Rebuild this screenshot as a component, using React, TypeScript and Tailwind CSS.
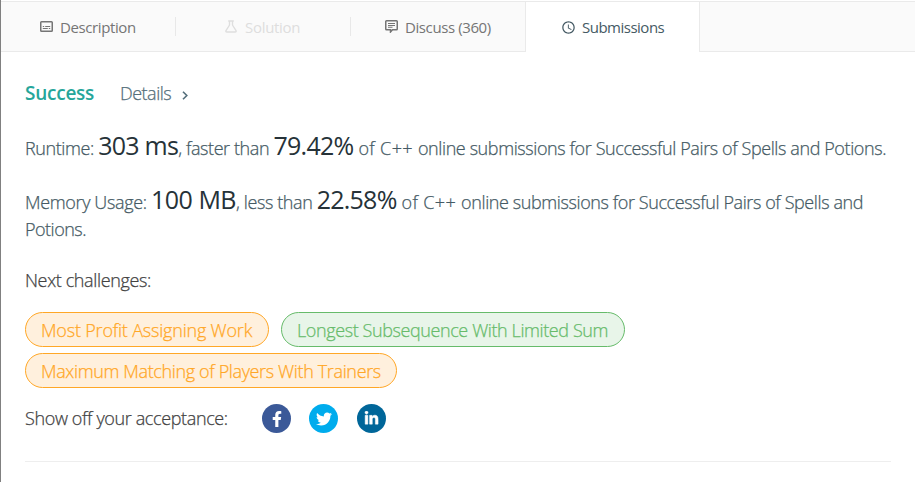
import { MdAccessTime } from "react-icons/md";
import { FaFacebookF, FaTwitter, FaLinkedinIn } from "react-icons/fa";

function SubtitlesIcon() {
  return (
    <svg viewBox="0 0 13 11" className="h-[11px] w-[13px] shrink-0" fill="none" stroke="currentColor">
      <rect x="0.75" y="0.75" width="11.5" height="9.5" rx="0.8" strokeWidth="1.5" />
      <path d="M2.8 5.500h1.400M5.200 5.500h5M2.800 7.500h5M8.800 7.500h1.400" strokeWidth="1.1" />
    </svg>
  );
}

function FlaskIcon() {
  return (
    <svg viewBox="0 0 12 13" className="h-[13px] w-3 shrink-0" fill="none" stroke="currentColor" strokeWidth="1.3">
      <path d="M3.2 1h5.6M4.5 1v4L1 10.6c-.4.8 0 1.4.8 1.4h8.4c.8 0 1.2-.6.8-1.4L7.500 5V1" />
    </svg>
  );
}

function CommentIcon() {
  return (
    <svg viewBox="0 0 13 13" className="h-[13px] w-[13px] shrink-0" fill="none" stroke="currentColor">
      <path d="M1.500 .75h10c.5 0 .75.3.75.75v7.500c0 .5-.3.75-.75.75H7.500L5.500 12V9.750h-4C1 9.750.75 9.500.75 9V1.500c0-.5.3-.75.75-.75z" strokeWidth="1.500" />
      <path d="M3 3.500h7M3 5.500h7M3 7.300h4.500" strokeWidth="1.1" />
    </svg>
  );
}

const big = "text-[25px] font-normal leading-[20px] tracking-[-0.75px] text-[#263238] [-webkit-text-stroke:0px]";
const pill = "flex h-[35px] items-center rounded-full border pl-[15px] pt-[2px]";

export default function App() {
  return (
    <div className="h-[482px] w-[915px] overflow-hidden border-l border-[#808080] bg-white font-['Open_Sans','Noto_Sans',sans-serif]">
      <nav className="mt-px flex h-[51px] border-y border-[#eaeaea] bg-[#fafafa] text-[15px] text-[#757575]">
        <div className="flex w-[174px] items-center pl-[39px]">
          <SubtitlesIcon />
          <span className="ml-[7px] whitespace-nowrap pt-px tracking-[-0.4px]">Description</span>
        </div>
        <div className="my-[15px] flex w-[175px] items-center border-l border-[#e8e8e8] pl-[49px] text-[#dedede]">
          <FlaskIcon />
          <span className="ml-2 whitespace-nowrap pt-px tracking-[-0.3px]">Solution</span>
        </div>
        <div className="my-[15px] flex w-[175px] items-center border-l border-[#e8e8e8] pl-[34px]">
          <CommentIcon />
          <span className="ml-[7px] whitespace-nowrap pt-px tracking-[-0.4px]">Discuss (360)</span>
        </div>
        <div className="-mb-px flex w-[175px] items-center border-x border-[#eaeaea] bg-white pl-[35px] text-[#455a64]">
          <MdAccessTime className="size-[15px] shrink-0" />
          <span className="ml-[6px] whitespace-nowrap pt-px tracking-[-0.5px]">Submissions</span>
        </div>
      </nav>
      <main className="pl-6 pr-6 text-[18px] font-light leading-[27px] text-[#455a64] [-webkit-text-stroke:0.25px]">
        <div className="flex pt-7">
          <strong className="w-[95px] text-[19px] font-semibold tracking-[-0.25px] text-[#26a69a] [-webkit-text-stroke:0px]">Success</strong>
          <a className="flex items-center whitespace-nowrap text-[#546e7a]">
            <span className="tracking-[-0.5px]">Details</span>
            <svg viewBox="0 0 6 9" className="ml-[11px] mt-[3px] h-[9px] w-[6px]" fill="none" stroke="currentColor" strokeWidth="1.6">
              <path d="M1 .7l3.800 3.800L1 8.300" />
            </svg>
          </a>
        </div>
        <p className="mt-7 whitespace-nowrap tracking-[-0.4px]">
          Runtime: <span className={big}>303 ms</span>, faster than <span className={big}>79.42%</span>
          <span className="tracking-[0.35px]"> of C++ </span>
          <span className="tracking-[-0.4px]">online submissions for Successful Pairs of Spells and Potions.</span>
        </p>
        <p className="mt-[27px] whitespace-nowrap tracking-[-0.4px]">
          <span className="tracking-[-0.35px]">Memory Usage: </span>
          <span className="text-[25px] font-normal leading-[20px] tracking-[-0.5px] text-[#263238] [-webkit-text-stroke:0px]">100 MB</span>, less than <span className={big}>22.58%</span>
          <span className="tracking-[0.35px]"> of C++ </span>
          <span className="tracking-[-0.4px]">online submissions for Successful Pairs of Spells and</span>
          <br />
          <span className="tracking-[-0.5px]">Potions.</span>
        </p>
        <p className="mt-6 tracking-[-0.37px] text-[#424242]">Next challenges:</p>
        <div className="mt-[18px] flex flex-wrap gap-x-3 gap-y-[6px] whitespace-nowrap">
          <a className={`${pill} w-[244px] border-[#ffa726] bg-[#fff0dd] tracking-[-0.19px] text-[#ffa726]`}>Most Profit Assigning Work</a>
          <a className={`${pill} w-[344px] border-[#66bb6a] bg-[#e8f5e9] tracking-[-0.4px] text-[#66bb6a]`}>Longest Subsequence With Limited Sum</a>
          <a className={`${pill} w-[372px] border-[#ffa726] bg-[#fff0dd] tracking-[-0.36px] text-[#ffa726]`}>Maximum Matching of Players With Trainers</a>
        </div>
        <div className="mt-4 flex h-[29px] items-center text-[#424242]">
          <span className="w-[237px] whitespace-nowrap tracking-[-0.37px]">Show off your acceptance:</span>
          <a className="grid size-[29px] place-items-center rounded-full bg-[#3b5998] text-white"><FaFacebookF className="size-4" /></a>
          <a className="ml-[18px] grid size-[29px] place-items-center rounded-full bg-[#00aced] text-white"><FaTwitter className="size-4" /></a>
          <a className="ml-[19px] grid size-[29px] place-items-center rounded-full bg-[#006699] text-white"><FaLinkedinIn className="size-[15px]" stroke="white" strokeWidth="16" /></a>
        </div>
        <hr className="mt-7 border-[#eeeeee]" />
      </main>
    </div>
  );
}
